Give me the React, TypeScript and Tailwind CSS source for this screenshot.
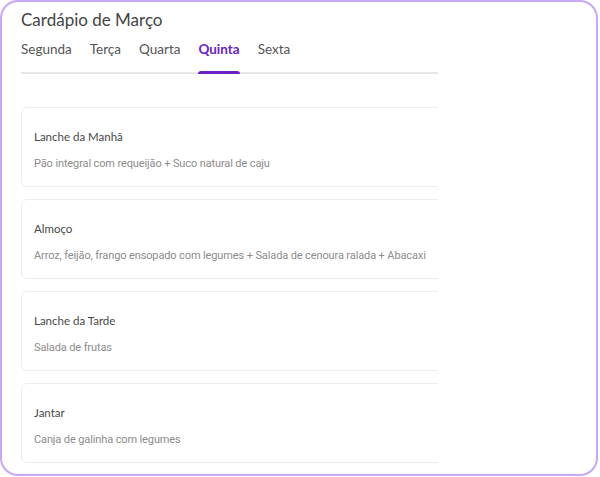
const days = ["Segunda", "Terça", "Quarta", "Quinta", "Sexta"];

const meals = [
  { name: "Lanche da Manhã", menu: "Pão integral com requeijão + Suco natural de caju" },
  { name: "Almoço", menu: "Arroz, feijão, frango ensopado com legumes + Salada de cenoura ralada + Abacaxi" },
  { name: "Lanche da Tarde", menu: "Salada de frutas" },
  { name: "Jantar", menu: "Canja de galinha com legumes" },
];

const heading = { fontFamily: "Lato, 'Noto Sans', sans-serif" };
const body = { fontFamily: "Roboto, 'Noto Sans', sans-serif" };

export default function App() {
  const active = "Quinta";

  return (
    <div className="w-[600px] h-[477px] bg-white">
      <div className="w-[598px] h-[476px] border-2 border-[#c8a8f6] rounded-[18px] overflow-hidden px-[19px] pt-[6px]">
        <h1 className="text-[17px] leading-[24px] text-[#444]" style={heading}>
          Cardápio de Março
        </h1>

        {/* tabs */}
        <div className="w-[417px] mt-[4px] flex gap-[18px] border-b-2 border-[#e8e8e8]" style={heading}>
          {days.map((day) => (
            <div key={day} className="relative pb-[12px]">
              <span
                className={
                  day === active
                    ? "text-[13.5px] leading-[18px] font-bold text-[#6a22c4]"
                    : "text-[13.5px] leading-[18px] text-[#555]"
                }
              >
                {day}
              </span>
              {day === active && (
                <div className="absolute left-0 right-0 -bottom-[2px] h-[3px] rounded-t-[3px] bg-[#6a22c4]" />
              )}
            </div>
          ))}
        </div>

        {/* meals */}
        <div className="w-[417px] overflow-hidden mt-[33px] flex flex-col gap-[12px]">
          {meals.map((meal) => (
            <div
              key={meal.name}
              className="w-[460px] h-[80px] shrink-0 border border-[#ececec] rounded-[6px] px-[12px] pt-[21px]"
            >
              <p className="text-[11.5px] leading-[16px] text-[#484848]" style={heading}>
                {meal.name}
              </p>
              <p
                className="mt-[11px] text-[11px] leading-[16px] tracking-[-0.12px] text-[#8c8c8c] whitespace-nowrap"
                style={body}
              >
                {meal.menu}
              </p>
            </div>
          ))}
        </div>
      </div>
    </div>
  );
}
